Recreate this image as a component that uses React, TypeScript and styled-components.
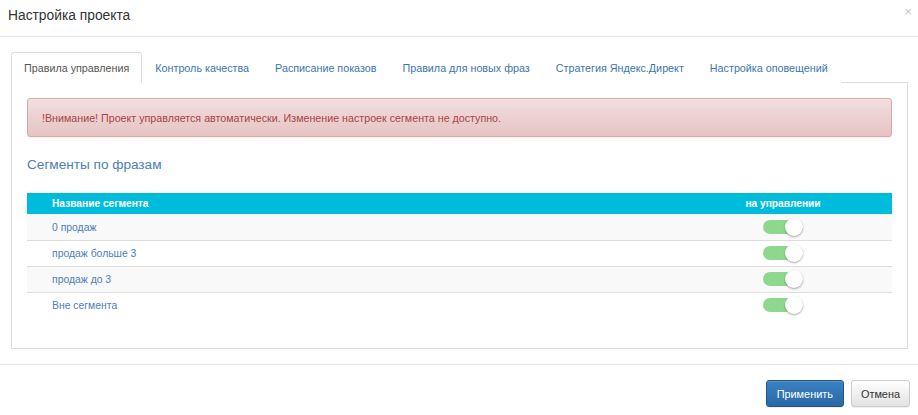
import React, { useState } from "react";
import styled, { createGlobalStyle } from "styled-components";

const GlobalStyle = createGlobalStyle`
  html, body {
    margin: 0;
    padding: 0;
    background: #fff;
    font-family: "Liberation Sans", Arial, sans-serif;
    color: #333;
  }
  * { box-sizing: border-box; }
`;

const Modal = styled.div`
  width: 918px;
  height: 415px;
  display: flex;
  flex-direction: column;
  overflow: hidden;
`;

const Header = styled.div`
  height: 37px;
  padding: 0 8px;
  display: flex;
  align-items: center;
  justify-content: space-between;
  border-bottom: 1px solid #e5e5e5;
`;

const Title = styled.h4`
  margin: -5px 0 0 0;
  font-size: 13.8px;
  font-weight: normal;
  color: #333;
`;

const Close = styled.button`
  border: 0;
  background: none;
  padding: 0;
  font-size: 13px;
  color: #c8c8c8;
  font-family: "Liberation Sans", Arial, sans-serif;
  margin-top: -13px;
  margin-right: -2px;
  cursor: pointer;
`;

const Body = styled.div`
  padding: 15px 10px 15px 11px;
  flex: 0 0 auto;
`;

const Tabs = styled.ul`
  display: flex;
  list-style: none;
  margin: 0;
  padding: 0;
  border-bottom: 1px solid #ddd;
  height: 31px;
`;

const Tab = styled.li<{ $active?: boolean }>`
  margin-bottom: -1px;
  padding: 0 12px;
  height: 31px;
  display: flex;
  align-items: center;
  font-size: 10.75px;
  border: 1px solid ${(p) => (p.$active ? "#ddd" : "transparent")};
  border-bottom-color: ${(p) => (p.$active ? "#fff" : "transparent")};
  border-radius: 3px 3px 0 0;
  background: #fff;
  color: ${(p) => (p.$active ? "#555" : "#3a76b0")};
  cursor: pointer;
  white-space: nowrap;
`;

const Panel = styled.div`
  border: 1px solid #ddd;
  border-top: 0;
  height: 266px;
  padding: 15px 15px 0 15px;
`;

const Alert = styled.div`
  height: 39px;
  padding: 0 14px;
  display: flex;
  align-items: center;
  font-size: 10.7px;
  color: #a94442;
  background: linear-gradient(#f2dede, #e7c3c3);
  border: 1px solid #dca7a7;
  border-radius: 3px;
  box-shadow: inset 0 1px 0 rgba(255, 255, 255, 0.25), 0 1px 2px rgba(0, 0, 0, 0.05);
`;

const SectionTitle = styled.h3`
  margin: 20px 0 0 0;
  font-size: 13.6px;
  font-weight: normal;
  color: #4a80b9;
  height: 36px;
`;

const Table = styled.table`
  width: 100%;
  border-collapse: collapse;
  font-size: 10.2px;
`;

const HeadCell = styled.th<{ $center?: boolean }>`
  background: #00bcdc;
  color: #fff;
  font-weight: bold;
  height: 21px;
  padding: 0 0 0 ${(p) => (p.$center ? "0" : "25px")};
  text-align: ${(p) => (p.$center ? "center" : "left")};
  width: ${(p) => (p.$center ? "218px" : "auto")};
`;

const Row = styled.tr<{ $striped?: boolean }>`
  background: ${(p) => (p.$striped ? "#f9f9f9" : "#fff")};
`;

const Cell = styled.td<{ $center?: boolean; $first?: boolean }>`
  height: 26px;
  padding: 0 0 0 ${(p) => (p.$center ? "0" : "25px")};
  color: #4a80b9;
  font-size: 10.4px;
  text-align: ${(p) => (p.$center ? "center" : "left")};
  vertical-align: middle;
  border-top: 1px solid ${(p) => (p.$first ? "transparent" : "#ddd")};
`;

const Toggle = styled.span<{ $on: boolean }>`
  position: relative;
  display: inline-block;
  width: 40px;
  height: 14px;
  border-radius: 7px;
  background: ${(p) => (p.$on ? "#8ed88e" : "#ccc")};
  vertical-align: middle;
  cursor: pointer;
`;

const Knob = styled.span<{ $on: boolean }>`
  position: absolute;
  top: -2px;
  left: ${(p) => (p.$on ? "22px" : "0")};
  width: 18px;
  height: 18px;
  border-radius: 50%;
  background: #fff;
  box-shadow: 0 1px 2px rgba(0, 0, 0, 0.35);
`;

const Footer = styled.div`
  border-top: 1px solid #e5e5e5;
  display: flex;
  justify-content: flex-end;
  gap: 7px;
  padding: 15px 8px 0 0;
`;

const Button = styled.button<{ $primary?: boolean }>`
  height: 27px;
  padding: 0 ${(p) => (p.$primary ? "10px" : "9px")};
  font-size: 10.9px;
  font-family: "Liberation Sans", Arial, sans-serif;
  border-radius: 3px;
  cursor: pointer;
  color: ${(p) => (p.$primary ? "#fff" : "#333")};
  border: 1px solid ${(p) => (p.$primary ? "#245580" : "#ccc")};
  background: ${(p) =>
    p.$primary
      ? "linear-gradient(#3a82c2, #2968a6)"
      : "linear-gradient(#fff, #e2e2e2)"};
  box-shadow: inset 0 1px 0 rgba(255, 255, 255, 0.15), 0 1px 1px rgba(0, 0, 0, 0.075);
`;

const tabs = [
  "Правила управления",
  "Контроль качества",
  "Расписание показов",
  "Правила для новых фраз",
  "Стратегия Яндекс.Директ",
  "Настройка оповещений",
];

const segments = ["0 продаж", "продаж больше 3", "продаж до 3", "Вне сегмента"];

export default function App() {
  const [active, setActive] = useState(0);
  const [states, setStates] = useState(segments.map(() => true));

  return (
    <Modal>
      <GlobalStyle />
      <Header>
        <Title>Настройка проекта</Title>
        <Close>×</Close>
      </Header>
      <Body>
        <Tabs>
          {tabs.map((t, i) => (
            <Tab key={t} $active={i === active} onClick={() => setActive(i)}>
              {t}
            </Tab>
          ))}
        </Tabs>
        <Panel>
          <Alert>
            !Внимание! Проект управляется автоматически. Изменение настроек
            сегмента не доступно.
          </Alert>
          <SectionTitle>Сегменты по фразам</SectionTitle>
          <Table>
            <thead>
              <tr>
                <HeadCell>Название сегмента</HeadCell>
                <HeadCell $center>на управлении</HeadCell>
              </tr>
            </thead>
            <tbody>
              {segments.map((s, i) => (
                <Row key={s} $striped={i % 2 === 0}>
                  <Cell $first={i === 0}>{s}</Cell>
                  <Cell $center $first={i === 0}>
                    <Toggle
                      $on={states[i]}
                      onClick={() =>
                        setStates(states.map((v, j) => (j === i ? !v : v)))
                      }
                    >
                      <Knob $on={states[i]} />
                    </Toggle>
                  </Cell>
                </Row>
              ))}
            </tbody>
          </Table>
        </Panel>
      </Body>
      <Footer>
        <Button $primary>Применить</Button>
        <Button>Отмена</Button>
      </Footer>
    </Modal>
  );
}
